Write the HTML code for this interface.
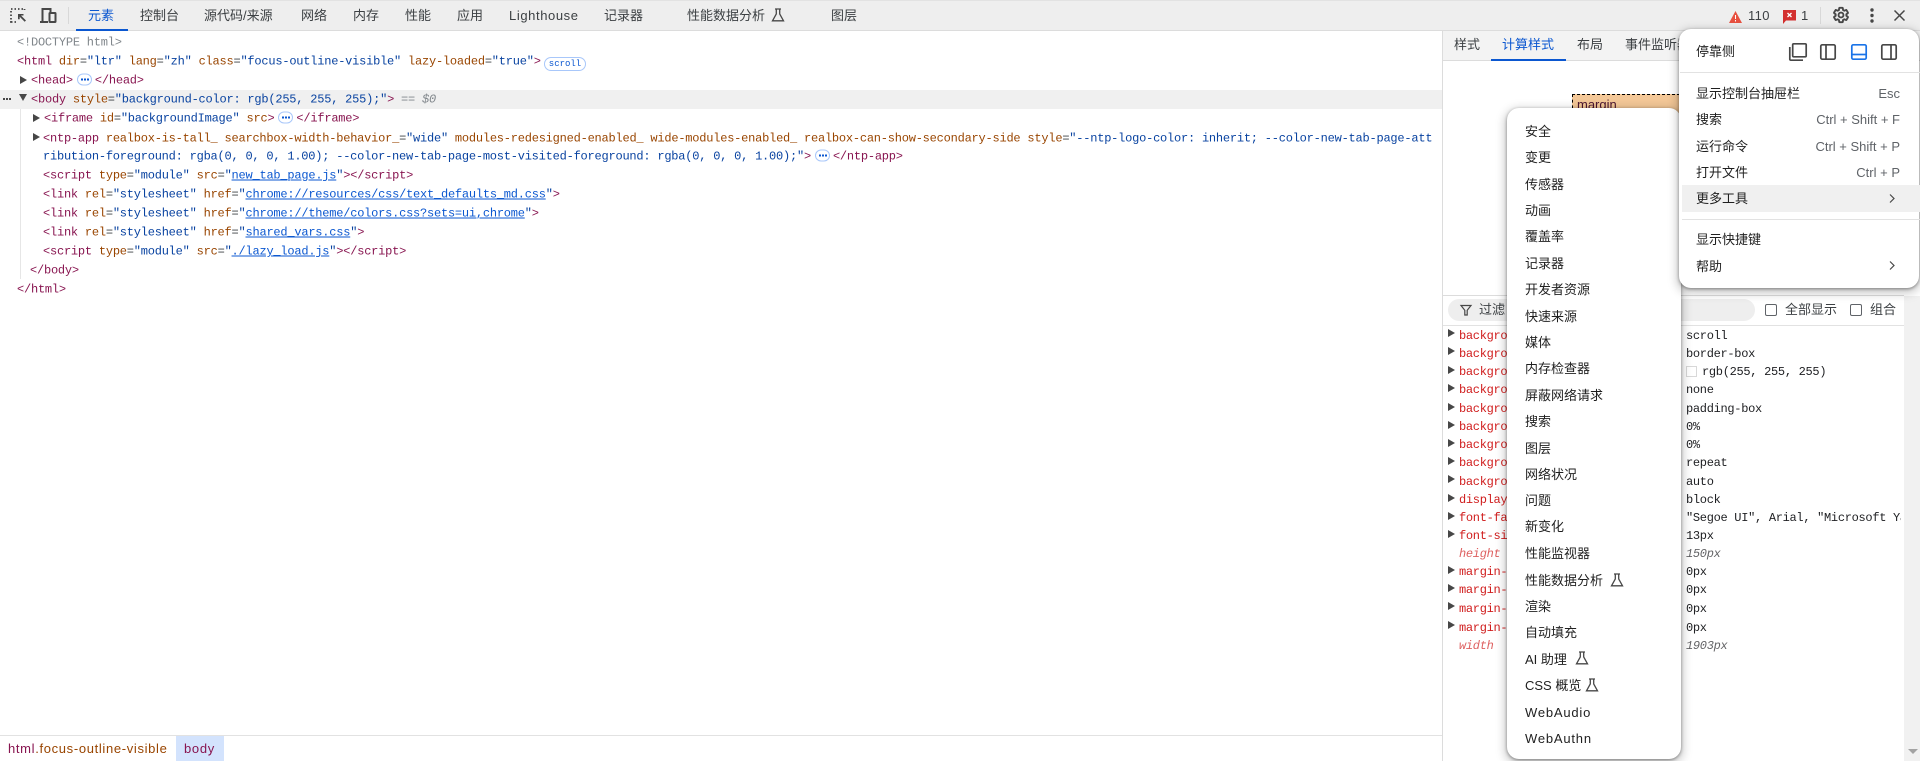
<!DOCTYPE html>
<html lang="zh"><head><meta charset="utf-8"><title>DevTools</title>
<style>
*{box-sizing:border-box}
html,body{margin:0;padding:0;width:1920px;height:761px;overflow:hidden;background:#fff}
body{position:relative;font:13px "Liberation Sans","Noto Sans CJK SC",sans-serif;color:#3c4043}
.a{position:absolute;white-space:pre}
.t{position:absolute;white-space:pre;line-height:18px;height:18px;transform:translateY(-9px)}
.c{position:absolute;white-space:pre;font:12px/19px "Liberation Mono","Noto Sans CJK SC",monospace;letter-spacing:-.22px;height:19px;transform:translateY(-9.5px)}
.tg{color:#881550}.at{color:#994500}.v{color:#0842a0}.l{color:#0b57d0;text-decoration:underline}.g{color:#80868b}
.p{display:inline-block;width:15px;height:12px;border:1px solid #a8c7fa;border-radius:6px;margin:0 3px 0 4px;vertical-align:-2px;position:relative}
.p:after{content:"";position:absolute;left:3px;top:4px;width:2px;height:2px;background:#0b57d0;box-shadow:3px 0 #0b57d0,6px 0 #0b57d0}
.tri{position:absolute;width:0;height:0;border-left:7px solid #474747;border-top:4.5px solid transparent;border-bottom:4.5px solid transparent}
.m{position:absolute;background:#fff;border-radius:12px;box-shadow:0 1px 3px rgba(0,0,0,.4),0 3px 10px 2px rgba(0,0,0,.22)}
.s{color:#1f1f1f;margin-top:1px}.k{color:#5f6368;margin-top:1px}
.n{position:absolute;white-space:pre;left:1459px;font:12px/18px "Liberation Mono",monospace;letter-spacing:-.3px;color:#d01c1c;height:18px;transform:translateY(-9px)}
.w{position:absolute;white-space:pre;left:1686px;font:12px/18px "Liberation Mono",monospace;letter-spacing:-.3px;color:#202124;height:18px;transform:translateY(-9px)}
.i{font-style:italic;opacity:.7}
svg{position:absolute;overflow:visible}
</style></head><body>

<!-- toolbar -->
<div class="a" style="left:0;top:0;width:1920px;height:31px;background:#eeeeee;border-top:1px solid #e2e2e2;border-bottom:1px solid #dcdcdc"></div>
<div class="a" style="left:76px;top:29px;width:52px;height:2px;background:#0b57d0"></div>
<div class="a" style="left:68px;top:7px;width:1px;height:17px;background:#d8d8d8"></div>
<div class="a" style="left:1820px;top:7px;width:1px;height:17px;background:#d8d8d8"></div>

<svg style="left:10px;top:7px" width="18" height="18" viewBox="0 0 18 18" fill="none" stroke="#474747"><path d="M1 2h1.500M4.500 2H6M8 2h1.500M11.500 2H13M14.500 2v1M1 4v1.500M1 7.500V9M1 11v1.500M1 14v1h1.500M4.500 15H6" stroke-width="1.800"/><path d="M8 7h5.500v1.500H11l5 5-1.300 1.300-5-5v2.500H8z" fill="#474747" stroke="none"/></svg>
<svg style="left:39px;top:7px" width="19" height="17" viewBox="0 0 19 17" fill="none" stroke="#474747" stroke-width="2"><path d="M1 15h8M3.500 15V2h8v3"/><rect x="10.500" y="6" width="6" height="9" rx=".5"/></svg>

<div class="t" style="left:88px;top:16px;color:#0b57d0">元素</div>
<div class="t" style="left:140px;top:16px">控制台</div>
<div class="t" style="left:204px;top:16px">源代码/来源</div>
<div class="t" style="left:301px;top:16px">网络</div>
<div class="t" style="left:353px;top:16px">内存</div>
<div class="t" style="left:405px;top:16px">性能</div>
<div class="t" style="left:457px;top:16px">应用</div>
<div class="t" style="left:509px;top:16px;letter-spacing:.6px">Lighthouse</div>
<div class="t" style="left:604px;top:16px">记录器</div>
<div class="t" style="left:687px;top:16px">性能数据分析</div>
<svg style="left:771px;top:8px" width="14" height="14" viewBox="0 0 14 14" fill="none" stroke="#474747" stroke-width="1.300"><path d="M4 1h6M5.300 1v5L1.500 12.800h11L8.700 6V1"/></svg>
<div class="t" style="left:831px;top:16px">图层</div>

<svg style="left:1729px;top:11px" width="13" height="12" viewBox="0 0 13 12"><path d="M6.500 0L13 12H0z" fill="#e8503f"/><path d="M6 4h1v4H6zM6 9h1v1.500H6z" fill="#fff"/></svg>
<div class="t" style="left:1748px;top:16px;letter-spacing:.4px">110</div>
<svg style="left:1783px;top:10px" width="13" height="14" viewBox="0 0 13 14"><path d="M0 0h13v10.500H3L0 14z" fill="#d3302f"/><path d="M4.500 3l4 4M8.500 3l-4 4" stroke="#fff" stroke-width="1.300"/></svg>
<div class="t" style="left:1801px;top:16px">1</div>
<svg style="left:1832px;top:6px" width="18" height="18" viewBox="0 0 24 24" fill="none" stroke="#474747" stroke-width="2.500"><path d="M19.140 12.940c.04-.3.060-.61.060-.94 0-.32-.02-.64-.07-.94l2.030-1.580c.18-.14.230-.41.120-.61l-1.920-3.320c-.12-.22-.37-.29-.59-.22l-2.390.96c-.5-.38-1.030-.7-1.620-.94l-.36-2.540c-.04-.24-.24-.41-.48-.41h-3.840c-.24 0-.43.17-.47.41l-.36 2.540c-.59.24-1.130.57-1.620.94l-2.390-.96c-.22-.08-.47 0-.59.22L2.740 8.870c-.12.21-.08.47.12.61l2.030 1.580c-.05.3-.09.63-.09.94s.02.64.07.94l-2.030 1.580c-.18.14-.23.41-.12.61l1.920 3.320c.12.22.37.29.59.22l2.390-.96c.5.38 1.030.7 1.620.94l.36 2.540c.05.24.24.41.48.41h3.840c.24 0 .44-.17.47-.41l.36-2.540c.59-.24 1.130-.56 1.620-.94l2.390.96c.22.08.47 0 .59-.22l1.920-3.320c.12-.22.070-.47-.12-.61l-2.010-1.580z"/><circle cx="12" cy="12" r="3.300"/></svg>
<svg style="left:1870px;top:8px" width="4" height="15" viewBox="0 0 4 15" fill="#474747"><circle cx="2" cy="2" r="1.700"/><circle cx="2" cy="7.500" r="1.700"/><circle cx="2" cy="13" r="1.700"/></svg>
<svg style="left:1894px;top:10px" width="11" height="11" viewBox="0 0 11 11" stroke="#474747" stroke-width="1.500"><path d="M.5.500l10 10M10.500.500l-10 10"/></svg>

<!-- elements pane -->
<div class="a" style="left:0;top:90px;width:1442px;height:19px;background:#f0f0f0"></div>
<div class="a" style="left:20px;top:109px;width:1px;height:170px;background:#e6e6e6"></div>
<div class="a" style="left:1442px;top:31px;width:1px;height:730px;background:#dcdcdc"></div>

<div class="c g" style="left:17px;top:43px">&lt;!DOCTYPE html&gt;</div>
<div class="c" style="left:17px;top:62px"><span class="tg">&lt;html</span> <span class="at">dir</span>=<span class="v">"ltr"</span> <span class="at">lang</span>=<span class="v">"zh"</span> <span class="at">class</span>=<span class="v">"focus-outline-visible"</span> <span class="at">lazy-loaded</span>=<span class="v">"true"</span><span class="tg">&gt;</span></div>
<div class="a" style="left:544px;top:57px;width:42px;height:14px;border:1px solid #a8c7fa;border-radius:7px;font:9px/13px 'Liberation Mono',monospace;color:#0b57d0;text-align:center">scroll</div>
<div class="tri" style="left:20px;top:76px"></div>
<div class="c" style="left:31px;top:81px"><span class="tg">&lt;head&gt;</span><span class="p"></span><span class="tg">&lt;/head&gt;</span></div>
<div class="a" style="left:3px;top:98px;width:2px;height:2px;background:#474747;box-shadow:3px 0 #474747,6px 0 #474747"></div>
<div class="tri" style="left:19px;top:94px;border:0;border-top:7px solid #474747;border-left:4.500px solid transparent;border-right:4.500px solid transparent"></div>
<div class="c" style="left:31px;top:100px"><span class="tg">&lt;body</span> <span class="at">style</span>=<span class="v">"background-color: rgb(255, 255, 255);"</span><span class="tg">&gt;</span> <span class="g">==</span> <span class="g" style="font-style:italic">$0</span></div>
<div class="tri" style="left:33px;top:114px"></div>
<div class="c" style="left:44px;top:119px"><span class="tg">&lt;iframe</span> <span class="at">id</span>=<span class="v">"backgroundImage"</span> <span class="at">src</span><span class="tg">&gt;</span><span class="p"></span><span class="tg">&lt;/iframe&gt;</span></div>
<div class="tri" style="left:33px;top:133px"></div>
<div class="c" style="left:43px;top:139px;width:1393px;overflow:hidden"><span class="tg">&lt;ntp-app</span> <span class="at">realbox-is-tall_</span> <span class="at">searchbox-width-behavior_</span>=<span class="v">"wide"</span> <span class="at">modules-redesigned-enabled_</span> <span class="at">wide-modules-enabled_</span> <span class="at">realbox-can-show-secondary-side</span> <span class="at">style</span>=<span class="v">"--ntp-logo-color: inherit; --color-new-tab-page-att</span></div>
<div class="c" style="left:43px;top:157px"><span class="v">ribution-foreground: rgba(0, 0, 0, 1.00); --color-new-tab-page-most-visited-foreground: rgba(0, 0, 0, 1.00);"</span><span class="tg">&gt;</span><span class="p"></span><span class="tg">&lt;/ntp-app&gt;</span></div>
<div class="c" style="left:43px;top:176px"><span class="tg">&lt;script</span> <span class="at">type</span>=<span class="v">"module"</span> <span class="at">src</span>=<span class="v">"</span><span class="l">new_tab_page.js</span><span class="v">"</span><span class="tg">&gt;&lt;/script&gt;</span></div>
<div class="c" style="left:43px;top:195px"><span class="tg">&lt;link</span> <span class="at">rel</span>=<span class="v">"stylesheet"</span> <span class="at">href</span>=<span class="v">"</span><span class="l">chrome://resources/css/text_defaults_md.css</span><span class="v">"</span><span class="tg">&gt;</span></div>
<div class="c" style="left:43px;top:214px"><span class="tg">&lt;link</span> <span class="at">rel</span>=<span class="v">"stylesheet"</span> <span class="at">href</span>=<span class="v">"</span><span class="l">chrome://theme/colors.css?sets=ui,chrome</span><span class="v">"</span><span class="tg">&gt;</span></div>
<div class="c" style="left:43px;top:233px"><span class="tg">&lt;link</span> <span class="at">rel</span>=<span class="v">"stylesheet"</span> <span class="at">href</span>=<span class="v">"</span><span class="l">shared_vars.css</span><span class="v">"</span><span class="tg">&gt;</span></div>
<div class="c" style="left:43px;top:252px"><span class="tg">&lt;script</span> <span class="at">type</span>=<span class="v">"module"</span> <span class="at">src</span>=<span class="v">"</span><span class="l">./lazy_load.js</span><span class="v">"</span><span class="tg">&gt;&lt;/script&gt;</span></div>
<div class="c tg" style="left:30px;top:271px">&lt;/body&gt;</div>
<div class="c tg" style="left:17px;top:290px">&lt;/html&gt;</div>

<!-- breadcrumbs -->
<div class="a" style="left:0;top:735px;width:1442px;height:1px;background:#e2e2e2"></div>
<div class="a" style="left:176px;top:736px;width:48px;height:25px;background:#d3e3fd"></div>
<div class="t" style="left:8px;top:749px;letter-spacing:.66px"><span class="tg">html</span><span class="at">.focus-outline-visible</span></div>
<div class="t tg" style="left:184px;top:749px;letter-spacing:.7px">body</div>

<!-- right pane -->
<div class="a" style="left:1443px;top:60px;width:477px;height:1px;background:#dcdcdc"></div>
<div class="a" style="left:1443px;top:31px;width:477px;height:29px;background:#f3f3f3"></div>
<div class="a" style="left:1491px;top:59px;width:75px;height:2px;background:#0b57d0"></div>
<div class="t" style="left:1454px;top:45px">样式</div>
<div class="t" style="left:1502px;top:45px;color:#0b57d0">计算样式</div>
<div class="t" style="left:1577px;top:45px">布局</div>
<div class="t" style="left:1625px;top:45px">事件监听器</div>

<div class="a" style="left:1572px;top:94px;width:108px;height:20px;background:#f3c797;border:1px dashed #000;border-bottom:0;overflow:hidden;font:13px/20px 'Liberation Sans',sans-serif;color:#4a1530;padding-left:4px">margin</div>

<div class="a" style="left:1443px;top:295px;width:461px;height:1px;background:#dcdcdc"></div>
<div class="a" style="left:1443px;top:325px;width:461px;height:1px;background:#e2e2e2"></div>
<div class="a" style="left:1904px;top:296px;width:16px;height:465px;background:#f1f1f1"></div>
<div class="a" style="left:1908px;top:749px;border-top:5px solid #a3a3a3;border-left:5px solid transparent;border-right:5px solid transparent"></div>
<div class="a" style="left:1448px;top:299px;width:307px;height:22px;background:#eeeeee;border-radius:11px"></div>
<svg style="left:1460px;top:304px" width="12" height="12" viewBox="0 0 12 12" fill="none" stroke="#474747" stroke-width="1.200"><path d="M1 1.500h10L7.200 6.300V11H4.800V6.300z"/></svg>
<div class="t" style="left:1479px;top:310px">过滤</div>
<div class="a" style="left:1765px;top:304px;width:12px;height:12px;border:1px solid #5f6368;border-radius:2px"></div>
<div class="t" style="left:1785px;top:310px">全部显示</div>
<div class="a" style="left:1850px;top:304px;width:12px;height:12px;border:1px solid #5f6368;border-radius:2px"></div>
<div class="t" style="left:1870px;top:310px">组合</div>

<div class="tri" style="left:1448px;top:329px"></div><div class="n" style="top:336px">background-attachment</div><div class="w" style="top:336px">scroll</div>
<div class="tri" style="left:1448px;top:347px"></div><div class="n" style="top:354px">background-clip</div><div class="w" style="top:354px">border-box</div>
<div class="tri" style="left:1448px;top:366px"></div><div class="n" style="top:372px">background-color</div><div class="w" style="top:372px"><span style="display:inline-block;width:11px;height:11px;border:1px solid #d8d8d8;vertical-align:-2px;margin-right:5px"></span>rgb(255, 255, 255)</div>
<div class="tri" style="left:1448px;top:384px"></div><div class="n" style="top:390px">background-image</div><div class="w" style="top:390px">none</div>
<div class="tri" style="left:1448px;top:403px"></div><div class="n" style="top:409px">background-origin</div><div class="w" style="top:409px">padding-box</div>
<div class="tri" style="left:1448px;top:421px"></div><div class="n" style="top:427px">background-position-x</div><div class="w" style="top:427px">0%</div>
<div class="tri" style="left:1448px;top:439px"></div><div class="n" style="top:445px">background-position-y</div><div class="w" style="top:445px">0%</div>
<div class="tri" style="left:1448px;top:457px"></div><div class="n" style="top:463px">background-repeat</div><div class="w" style="top:463px">repeat</div>
<div class="tri" style="left:1448px;top:475px"></div><div class="n" style="top:482px">background-size</div><div class="w" style="top:482px">auto</div>
<div class="tri" style="left:1448px;top:494px"></div><div class="n" style="top:500px">display</div><div class="w" style="top:500px">block</div>
<div class="tri" style="left:1448px;top:512px"></div><div class="n" style="top:518px">font-family</div><div class="w" style="top:518px;width:215px;overflow:hidden">"Segoe UI", Arial, "Microsoft YaHei"</div>
<div class="tri" style="left:1448px;top:530px"></div><div class="n" style="top:536px">font-size</div><div class="w" style="top:536px">13px</div>
<div class="n i" style="top:554px">height</div><div class="w i" style="top:554px">150px</div>
<div class="tri" style="left:1448px;top:566px"></div><div class="n" style="top:572px">margin-bottom</div><div class="w" style="top:572px">0px</div>
<div class="tri" style="left:1448px;top:584px"></div><div class="n" style="top:590px">margin-left</div><div class="w" style="top:590px">0px</div>
<div class="tri" style="left:1448px;top:602px"></div><div class="n" style="top:609px">margin-right</div><div class="w" style="top:609px">0px</div>
<div class="tri" style="left:1448px;top:621px"></div><div class="n" style="top:628px">margin-top</div><div class="w" style="top:628px">0px</div>
<div class="n i" style="top:646px">width</div><div class="w i" style="top:646px">1903px</div>

<!-- sub menu -->
<div class="m" style="left:1507px;top:108px;width:174px;height:651px"></div>
<div class="t s" style="left:1525px;top:131px">安全</div>
<div class="t s" style="left:1525px;top:157px">变更</div>
<div class="t s" style="left:1525px;top:184px">传感器</div>
<div class="t s" style="left:1525px;top:210px">动画</div>
<div class="t s" style="left:1525px;top:236px">覆盖率</div>
<div class="t s" style="left:1525px;top:263px">记录器</div>
<div class="t s" style="left:1525px;top:289px">开发者资源</div>
<div class="t s" style="left:1525px;top:316px">快速来源</div>
<div class="t s" style="left:1525px;top:342px">媒体</div>
<div class="t s" style="left:1525px;top:368px">内存检查器</div>
<div class="t s" style="left:1525px;top:395px">屏蔽网络请求</div>
<div class="t s" style="left:1525px;top:421px">搜索</div>
<div class="t s" style="left:1525px;top:448px">图层</div>
<div class="t s" style="left:1525px;top:474px">网络状况</div>
<div class="t s" style="left:1525px;top:500px">问题</div>
<div class="t s" style="left:1525px;top:526px">新变化</div>
<div class="t s" style="left:1525px;top:553px">性能监视器</div>
<div class="t s" style="left:1525px;top:580px">性能数据分析</div>
<svg style="left:1610px;top:573px" width="14" height="14" viewBox="0 0 14 14" fill="none" stroke="#474747" stroke-width="1.300"><path d="M4 1h6M5.300 1v5L1.500 12.800h11L8.700 6V1"/></svg>
<div class="t s" style="left:1525px;top:606px">渲染</div>
<div class="t s" style="left:1525px;top:632px">自动填充</div>
<div class="t s" style="left:1525px;top:659px">AI 助理</div>
<svg style="left:1575px;top:651px" width="14" height="14" viewBox="0 0 14 14" fill="none" stroke="#474747" stroke-width="1.300"><path d="M4 1h6M5.300 1v5L1.500 12.800h11L8.700 6V1"/></svg>
<div class="t s" style="left:1525px;top:685px">CSS 概览</div>
<svg style="left:1585px;top:678px" width="14" height="14" viewBox="0 0 14 14" fill="none" stroke="#474747" stroke-width="1.300"><path d="M4 1h6M5.300 1v5L1.500 12.800h11L8.700 6V1"/></svg>
<div class="t s" style="left:1525px;top:712px;letter-spacing:.8px">WebAudio</div>
<div class="t s" style="left:1525px;top:738px;letter-spacing:.8px">WebAuthn</div>

<!-- main menu -->
<div class="m" style="left:1679px;top:29px;width:240px;height:259px"></div>
<div class="a" style="left:1682px;top:185px;width:238px;height:27px;background:#f0f0f0"></div>
<div class="a" style="left:1680px;top:72px;width:240px;height:1px;background:#e2e2e2"></div>
<div class="a" style="left:1682px;top:219px;width:238px;height:1px;background:#e2e2e2"></div>
<div class="t s" style="left:1696px;top:52px;margin-top:0">停靠侧</div>
<svg style="left:1789px;top:43px" width="18" height="18" viewBox="0 0 18 18" fill="none" stroke="#474747" stroke-width="1.700"><rect x="3.700" y=".8" width="13.500" height="13" rx="1"/><path d="M.8 4v12.200a1 1 0 0 0 1 1H14"/></svg>
<svg style="left:1820px;top:44px" width="16" height="16" viewBox="0 0 16 16" fill="none" stroke="#474747" stroke-width="1.700"><rect x=".8" y=".8" width="14.400" height="14.400" rx="1.500"/><path d="M6 1v14"/></svg>
<svg style="left:1851px;top:44px" width="16" height="16" viewBox="0 0 16 16" fill="none" stroke="#1a73e8" stroke-width="1.700"><rect x=".8" y=".8" width="14.400" height="14.400" rx="1.500"/><path d="M1 10.500h14"/></svg>
<svg style="left:1881px;top:44px" width="16" height="16" viewBox="0 0 16 16" fill="none" stroke="#474747" stroke-width="1.700"><rect x=".8" y=".8" width="14.400" height="14.400" rx="1.500"/><path d="M10 1v14"/></svg>
<div class="t s" style="left:1696px;top:93px">显示控制台抽屉栏</div><div class="t k" style="right:20px;top:93px">Esc</div>
<div class="t s" style="left:1696px;top:119px">搜索</div><div class="t k" style="right:20px;top:119px">Ctrl + Shift + F</div>
<div class="t s" style="left:1696px;top:146px">运行命令</div><div class="t k" style="right:20px;top:146px">Ctrl + Shift + P</div>
<div class="t s" style="left:1696px;top:172px">打开文件</div><div class="t k" style="right:20px;top:172px">Ctrl + P</div>
<div class="t s" style="left:1696px;top:198px">更多工具</div>
<svg style="left:1889px;top:194px" width="6" height="9" viewBox="0 0 6 9" fill="none" stroke="#474747" stroke-width="1.200"><path d="M1 .5l4 4-4 4"/></svg>
<div class="t s" style="left:1696px;top:239px">显示快捷键</div>
<div class="t s" style="left:1696px;top:266px">帮助</div>
<svg style="left:1889px;top:261px" width="6" height="9" viewBox="0 0 6 9" fill="none" stroke="#474747" stroke-width="1.200"><path d="M1 .5l4 4-4 4"/></svg>
</body></html>
